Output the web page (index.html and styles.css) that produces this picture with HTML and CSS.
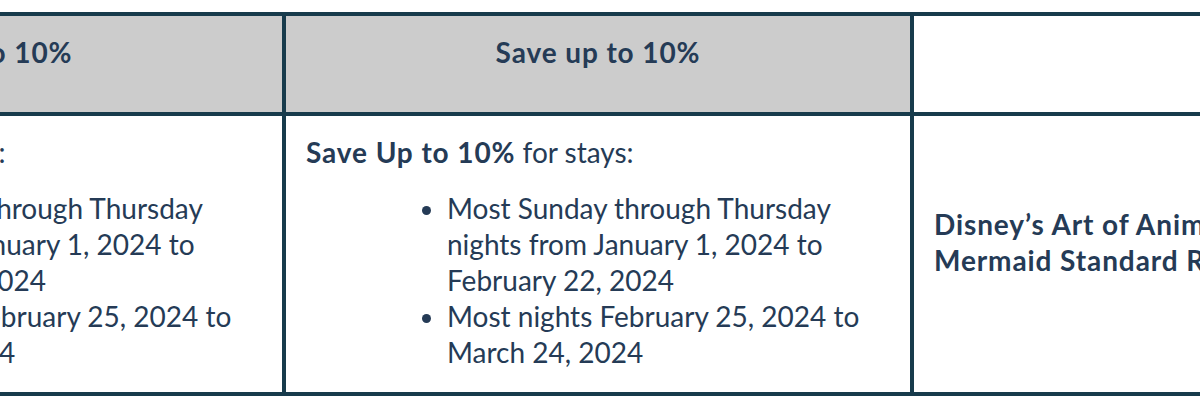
FILE: index.html
```html
<!DOCTYPE html>
<html lang="en">
<head>
<meta charset="utf-8">
<title>Offers</title>
<link rel="stylesheet" href="styles.css">
</head>
<body>
<table class="offers">
  <tr class="head-row">
    <td class="cell head"><p class="head-text">Save up to 10%</p></td>
    <td class="cell head"><p class="head-text">Save up to 10%</p></td>
    <td class="cell head blank"></td>
  </tr>
  <tr class="body-row">
    <td class="cell">
      <p class="lead"><strong>Save Up to 10%</strong> for stays:</p>
      <ul class="dates">
        <li>Most Sunday through Thursday nights from January 1, 2024 to February 22, 2024</li>
        <li>Most nights February 25, 2024 to March 24, 2024</li>
      </ul>
    </td>
    <td class="cell">
      <p class="lead"><strong>Save Up to 10%</strong> for stays:</p>
      <ul class="dates">
        <li>Most Sunday through Thursday nights from January 1, 2024 to February 22, 2024</li>
        <li>Most nights February 25, 2024 to March 24, 2024</li>
      </ul>
    </td>
    <td class="cell">
      <p class="room">Disney’s Art of Animation Resort – Little<br>Mermaid Standard Room</p>
    </td>
  </tr>
</table>
</body>
</html>
```

FILE: styles.css
```css
html, body {
  margin: 0;
  padding: 0;
  background: #ffffff;
  overflow: hidden;
}

body {
  padding-top: 12px;
  font-family: Lato, "Open Sans", "Liberation Sans", sans-serif;
  font-size: 28px;
  line-height: 36px;
  color: #253b56;
}

.offers {
  border-collapse: collapse;
  margin-left: -346px;
  table-layout: fixed;
  width: 1888px;
}

.cell {
  width: 584px;
  padding: 18px 20px 22px;
  border: 4px solid #173b4c;
  vertical-align: middle;
  text-align: left;
}

.head {
  background: #cccccc;
  text-align: center;
}

.head.blank {
  background: #ffffff;
}

.head-text {
  margin: 0 0 20px;
  font-weight: 700;
  letter-spacing: 0.9px;
}

.lead {
  margin: 0 0 20px;
}

.lead strong {
  font-weight: 700;
  letter-spacing: 0.9px;
}

.dates {
  margin: 0;
  padding-left: 141px;
  list-style: disc;
}

.room {
  margin: 0 0 20px;
  font-weight: 700;
  letter-spacing: 0.9px;
  white-space: nowrap;
}
```
